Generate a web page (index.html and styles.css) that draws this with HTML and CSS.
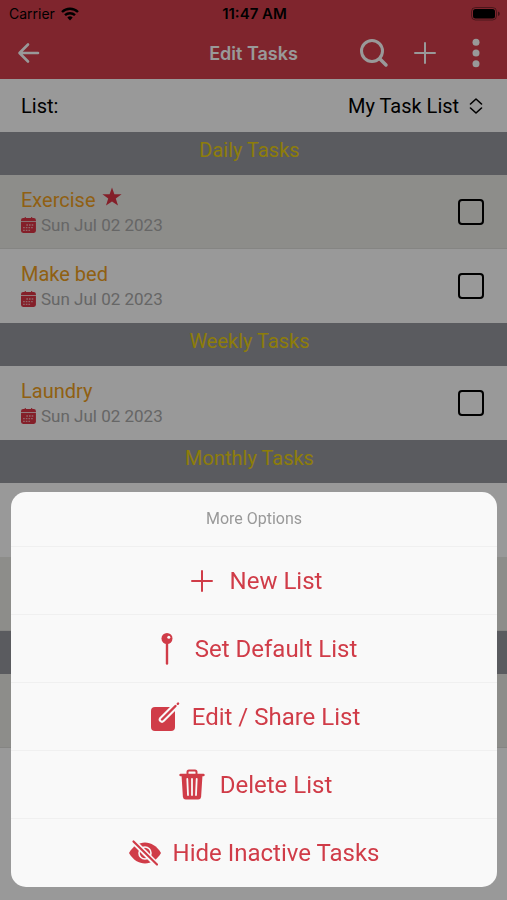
FILE: index.html
```html
<!DOCTYPE html>
<html lang="en">
  <head>
    <meta charset="UTF-8" />
    <meta name="viewport" content="width=device-width, initial-scale=1.0" />
    <title>Edit Tasks</title>
    <link rel="stylesheet" href="styles.css" />
  </head>
  <body>
    <!-- Shared icons -->
    <svg class="icon-defs" aria-hidden="true">
      <symbol id="icon-calendar" viewBox="1 0 15 15">
        <path d="M3 1h1.500V0h1v1h5V0h1v1H13a2 2 0 0 1 2 2v1H1V3a2 2 0 0 1 2-2z" fill="currentColor" />
        <path d="M1 4.700h14v8.300a2 2 0 0 1-2 2H3a2 2 0 0 1-2-2z" fill="currentColor" />
        <path d="M6 7.500h7M3 10h10M3 12.500h7" stroke="#fff" stroke-opacity=".6" stroke-width="1.200" stroke-dasharray="1.500 1" />
      </symbol>
      <symbol id="icon-plus" viewBox="0 0 24 24">
        <path d="M12 2v20M2 12h20" fill="none" stroke="currentColor" stroke-width="2" stroke-linecap="round" />
      </symbol>
    </svg>

    <div class="app">
      <header class="header">
        <div class="status-bar">
          <div class="carrier">
            <span>Carrier</span>
            <svg width="18" height="14" viewBox="0 0 18 14" fill="none" stroke="currentColor" stroke-width="2.400">
              <path d="M1 5a11.500 11.500 0 0 1 16 0" />
              <path d="M4 8.200a7.200 7.200 0 0 1 10 0" />
              <path d="M6.300 10.400a4 4 0 0 1 5.400 0L9 13.400z" fill="currentColor" stroke="none" />
            </svg>
          </div>
          <time class="clock">11:47 AM</time>
          <svg class="battery" width="29" height="14" viewBox="0 0 29 14">
            <rect x="0.500" y="0.500" width="25" height="12.500" rx="4" fill="none" stroke="currentColor" stroke-opacity=".4" />
            <rect x="2" y="2" width="22" height="9.500" rx="2.500" fill="currentColor" />
            <path d="M27 4.500a2.300 2.300 0 0 1 0 4.500z" fill="currentColor" fill-opacity=".5" />
          </svg>
        </div>
        <div class="toolbar">
          <button class="tool-button" aria-label="Back">
            <svg width="24" height="24" viewBox="0 0 24 24" fill="none" stroke="currentColor" stroke-width="2.600" stroke-linecap="round" stroke-linejoin="round">
              <path d="M12 3.500L3.500 12l8.500 8.500M4 12h18" />
            </svg>
          </button>
          <h1>Edit Tasks</h1>
          <div class="toolbar-actions">
            <button class="tool-button" aria-label="Search">
              <svg width="30" height="30" viewBox="0 0 30 30" fill="none" stroke="currentColor" stroke-width="3" stroke-linecap="round">
                <circle cx="13" cy="13" r="10.500" />
                <path d="M21 21l6 6" stroke-width="3.500" />
              </svg>
            </button>
            <button class="tool-button" aria-label="Add task">
              <svg width="24" height="24"><use href="#icon-plus" /></svg>
            </button>
            <button class="tool-button" aria-label="More options">
              <svg width="30" height="30" viewBox="0 0 30 30" fill="currentColor">
                <circle cx="15" cy="4.300" r="3.500" />
                <circle cx="15" cy="15" r="3.500" />
                <circle cx="15" cy="25.700" r="3.500" />
              </svg>
            </button>
          </div>
        </div>
      </header>

      <main>
        <div class="list-picker">
          <label for="list">List:</label>
          <div class="select-wrap">
            <select id="list">
              <option>My Task List</option>
            </select>
            <svg width="14" height="16" viewBox="0 0 14 16" fill="none" stroke="currentColor" stroke-width="1.600" stroke-linecap="round" stroke-linejoin="round">
              <path d="M1.500 6L7 1l5.500 5M1.500 10L7 15l5.500-5" />
            </svg>
          </div>
        </div>

        <h2 class="section-title">Daily Tasks</h2>
        <div class="task task-alt">
          <div class="task-info">
            <label class="task-name" for="exercise">
              Exercise
              <svg class="star" width="20" height="20" viewBox="0 0 20 20" fill="currentColor">
                <path d="M10 0.500l2.400 6.800h7.200l-5.800 4.300 2.200 7L10 14.400l-6 4.200 2.200-7L.4 7.300h7.200z" />
              </svg>
            </label>
            <p class="task-date">
              <svg width="16" height="16"><use href="#icon-calendar" /></svg>
              Sun Jul 02 2023
            </p>
          </div>
          <input type="checkbox" id="exercise" />
        </div>
        <div class="task">
          <div class="task-info">
            <label class="task-name" for="make-bed">Make bed</label>
            <p class="task-date">
              <svg width="16" height="16"><use href="#icon-calendar" /></svg>
              Sun Jul 02 2023
            </p>
          </div>
          <input type="checkbox" id="make-bed" />
        </div>

        <h2 class="section-title">Weekly Tasks</h2>
        <div class="task">
          <div class="task-info">
            <label class="task-name" for="laundry">Laundry</label>
            <p class="task-date">
              <svg width="16" height="16"><use href="#icon-calendar" /></svg>
              Sun Jul 02 2023
            </p>
          </div>
          <input type="checkbox" id="laundry" />
        </div>

        <h2 class="section-title">Monthly Tasks</h2>
        <div class="task"></div>
        <div class="task task-alt"></div>
        <h2 class="section-title"></h2>
        <div class="task task-alt"></div>
      </main>
    </div>

    <div class="backdrop">
      <div class="sheet" role="dialog" aria-labelledby="sheet-title">
        <h2 class="sheet-title" id="sheet-title">More Options</h2>
        <button class="sheet-option">
          <svg width="32" height="32" viewBox="0 0 32 32" fill="none" stroke="currentColor" stroke-width="2" stroke-linecap="round">
            <path d="M16 6v20M6 16h20" />
          </svg>
          <span>New List</span>
        </button>
        <button class="sheet-option">
          <svg width="32" height="32" viewBox="0 0 32 32">
            <circle cx="16" cy="5.500" r="5.500" fill="currentColor" />
            <circle cx="17.800" cy="4.300" r="1.500" fill="#f9f9f9" />
            <path d="M16 10v20.500" stroke="currentColor" stroke-width="2.400" stroke-linecap="round" />
          </svg>
          <span>Set Default List</span>
        </button>
        <button class="sheet-option">
          <svg width="32" height="32" viewBox="0 0 32 32" fill="none">
            <rect x="3" y="6" width="24" height="24" rx="4" fill="currentColor" />
            <path d="M14 18.500L27 5.500" stroke="#f9f9f9" stroke-width="6.500" stroke-linecap="round" />
            <path d="M14 18.500L27.500 5" stroke="currentColor" stroke-width="2.400" stroke-linecap="round" />
            <path d="M29.800 2.800l.3-.3" stroke="currentColor" stroke-width="2.400" stroke-linecap="round" />
          </svg>
          <span>Edit / Share List</span>
        </button>
        <button class="sheet-option">
          <svg width="32" height="32" viewBox="0 0 32 32" fill="none" stroke="currentColor">
            <path d="M11.500 5V3a1.500 1.500 0 0 1 1.500-1.500h6A1.500 1.500 0 0 1 20.500 3v2" stroke-width="2" />
            <path d="M4.500 6h23" stroke-width="2.400" stroke-linecap="round" />
            <path d="M5.500 6h21l-1.400 22a3 3 0 0 1-3 2.500H9.900a3 3 0 0 1-3-2.500z" fill="currentColor" stroke="none" />
            <path d="M11.300 10l.7 16M16 10v16M20.700 10l-.7 16" stroke="#f9f9f9" stroke-width="1.800" stroke-linecap="round" />
          </svg>
          <span>Delete List</span>
        </button>
        <button class="sheet-option">
          <svg width="32" height="32" viewBox="0 0 32 32" fill="none">
            <path d="M0 16C4 9 10 5.500 16 5.500S28 9 32 16c-4 7-10 10.500-16 10.500S4 23 0 16z" fill="currentColor" />
            <circle cx="16" cy="16" r="6" stroke="#f9f9f9" stroke-width="1.600" />
            <circle cx="16" cy="16" r="2.500" fill="#f9f9f9" />
            <path d="M4 4l24.500 24.500" stroke="#f9f9f9" stroke-width="5.500" />
            <path d="M4.500 4.500l23.500 23" stroke="currentColor" stroke-width="2.200" stroke-linecap="round" />
          </svg>
          <span>Hide Inactive Tasks</span>
        </button>
      </div>
    </div>
  </body>
</html>
```
FILE: styles.css
```css
* {
  box-sizing: border-box;
}

body {
  margin: 0;
  background-color: #fff;
  color: #000;
  font-family: Roboto, "Liberation Sans", sans-serif;
}

h1,
h2,
p {
  margin: 0;
  font-weight: 400;
}

button,
select {
  padding: 0;
  border: none;
  background: none;
  color: inherit;
  font: inherit;
}

.icon-defs {
  display: none;
}

/* Header */
.header {
  background-color: #d43f4c;
}

.status-bar {
  display: grid;
  grid-template-columns: 1fr auto 1fr;
  align-items: center;
  height: 27px;
  padding: 0 7px 0 9px;
  font-family: Inter, sans-serif;
  font-size: 14px;
}

.carrier {
  display: flex;
  align-items: center;
  gap: 6px;
}

.clock {
  font-size: 15px;
  font-weight: 600;
}

.battery {
  justify-self: end;
}

.toolbar {
  display: grid;
  grid-template-columns: 1fr auto 1fr;
  align-items: center;
  height: 52px;
  padding: 0 16px;
  color: #fff;
}

.toolbar h1 {
  font-family: Inter, sans-serif;
  font-size: 18px;
  font-weight: 600;
}

.toolbar-actions {
  display: flex;
  justify-content: flex-end;
  align-items: center;
  gap: 24px;
}

.tool-button {
  display: flex;
}

/* List picker */
.list-picker {
  display: flex;
  justify-content: space-between;
  align-items: center;
  height: 53px;
  padding: 0 24px 0 21px;
  font-size: 20px;
}

.select-wrap {
  display: flex;
  align-items: center;
  gap: 9px;
}

.select-wrap select {
  appearance: none;
}

/* Tasks */
.section-title {
  height: 43px;
  padding: 6px 8px 0 0;
  background-color: #96989e;
  color: #ecd010;
  font-size: 20px;
  line-height: 24px;
  text-align: center;
}

.task {
  display: flex;
  justify-content: space-between;
  align-items: center;
  height: 74px;
  padding: 0 23px 0 21px;
}

.task-alt {
  background-color: #ebebe7;
  border-bottom: 1px solid #dededa;
}

.task-name {
  display: flex;
  align-items: flex-start;
  gap: 6px;
  color: #f0a020;
  font-size: 20px;
  line-height: 26px;
}

.star,
.task-date svg {
  color: #dc3545;
}

.task-date {
  display: flex;
  align-items: center;
  gap: 4px;
  color: #aaa;
  font-size: 17px;
  line-height: 24px;
}

.task input {
  appearance: none;
  width: 26px;
  height: 26px;
  margin: 0;
  border: 2px solid #000;
  border-radius: 4px;
}

/* Action sheet */
.backdrop {
  position: fixed;
  inset: 0;
  display: flex;
  flex-direction: column;
  justify-content: flex-end;
  padding: 0 10px 13px 11px;
  background-color: rgba(0, 0, 0, 0.4);
}

.sheet {
  overflow: hidden;
  padding-bottom: 1px;
  border-radius: 15px;
  background-color: #f9f9f9;
}

.sheet-title {
  color: #999;
  font-size: 16px;
  line-height: 54px;
  text-align: center;
}

.sheet-option {
  display: flex;
  justify-content: center;
  align-items: center;
  gap: 12px;
  width: 100%;
  height: 68px;
  border-top: 1px solid #f0f0f0;
  color: #d03c48;
  font-size: 24px;
}
```
